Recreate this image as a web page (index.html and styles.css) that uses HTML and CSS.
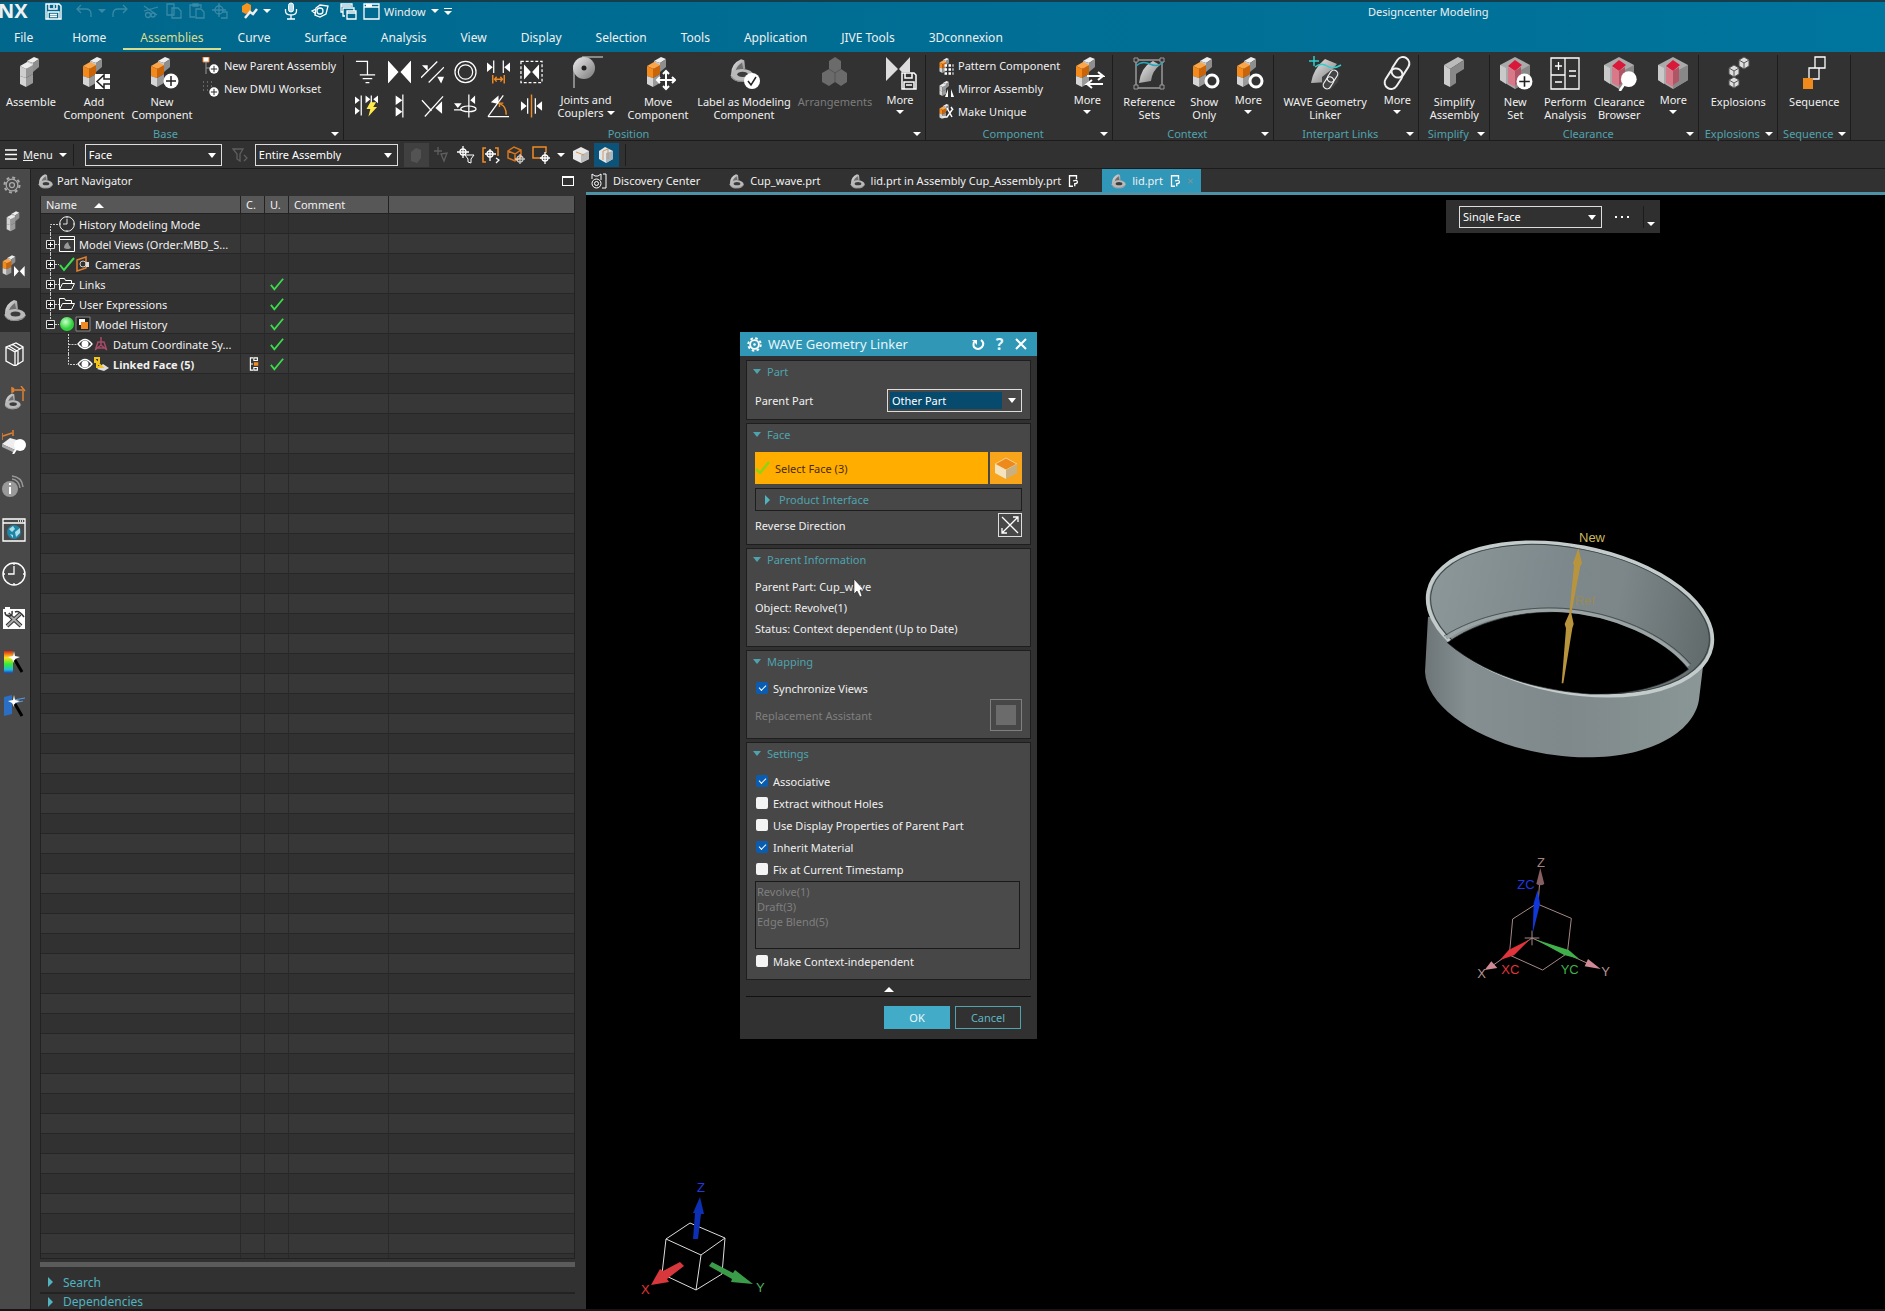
FILE: index.html
```html
<!DOCTYPE html>
<html lang="en">
<head>
<meta charset="utf-8">
<title>Designcenter Modeling</title>
<link rel="stylesheet" href="styles.css">
</head>
<body>
<svg class="defs" aria-hidden="true">
  <defs>
    <linearGradient id="metal" x1="0" y1="0" x2="1" y2="1"><stop offset="0" stop-color="#eee"/><stop offset="1" stop-color="#777"/></linearGradient>
    <linearGradient id="rainbow" x1="0" y1="0" x2="0" y2="1"><stop offset="0" stop-color="#d21"/><stop offset=".3" stop-color="#fd2"/><stop offset=".6" stop-color="#3e3"/><stop offset=".85" stop-color="#2bd"/><stop offset="1" stop-color="#14c"/></linearGradient>
    <radialGradient id="ball" cx=".4" cy=".35"><stop offset="0" stop-color="#c8ffc8"/><stop offset="1" stop-color="#2fd23c"/></radialGradient>
  </defs>
  <symbol id="blocks" viewBox="0 0 36 36">
    <path fill="#eee" d="M14 6l7-4 5 2-6 4z"/><path fill="#c9c9c9" d="M14 6l6 2v9l-6-2z"/><path fill="#8e8e8e" d="M20 8l6-4v8l-6 5z"/>
    <path class="c-top" d="M7 11l7-4 6 3-7 4z"/><path class="c-left" d="M7 11l6 3v9l-6-2z"/><path class="c-right" d="M13 14l7-4v9l-7 4z"/>
    <path fill="#d5d5d5" d="M7 21l6 2v9l-6-3z"/><path fill="#9a9a9a" d="M13 23l7-4v9l-7 4z"/>
  </symbol>
  <symbol id="part" viewBox="0 0 24 24">
    <path fill="url(#metal)" d="M3 15Q3 6 12 2l3 1 1 8-5 2q-2 2-1 3l-4 3z"/>
    <path fill="#6d6d6d" d="M7 14q0-5 6-9l1 6q-5 1-7 3z"/>
    <ellipse cx="13" cy="17" rx="10.500" ry="6" fill="#b9b9b9"/><ellipse cx="13.500" cy="16" rx="5" ry="2.500" fill="#3c3c3c"/>
    <path fill="none" stroke="#888" d="M3 18q4 6 13 4 6-1 8-5"/>
  </symbol>
  <symbol id="mate" viewBox="0 0 24 24"><path fill="#fff" d="M0 0l11 12L0 24zM24 0L13 12l11 12z"/></symbol>
  <symbol id="tick" viewBox="0 0 16 16"><path fill="none" stroke="#3bdc4c" stroke-width="2" d="M1 9l4 5L15 2"/></symbol>
  <symbol id="folder" viewBox="0 0 16 16"><path fill="none" stroke="#fff" d="M.5 13.500V2.500h5l1 2h6v3M.5 13.500l3-6h12l-3 6z"/></symbol>
  <symbol id="clock" viewBox="0 0 24 24"><circle cx="12" cy="12" r="11" fill="none" stroke="#fff" stroke-width="1.400"/><path fill="none" stroke="#fff" stroke-width="1.300" d="M12 4v8H6M12 1v2M12 21v2M1 12h2M21 12h2"/></symbol>
  <symbol id="hex" viewBox="0 0 36 36">
    <path fill="#aaa" d="M3 10L18 2l15 8v15l-15 9L3 25z"/><path fill="#888" d="M18 18l15-8v15l-15 9z"/><path fill="#c9c9c9" d="M3 10l6 3v16l-6-4z"/>
    <path fill="#d9183a" d="M11 11l7-6 7 5-7 6z"/><path fill="#d8798a" d="M11 12l7 4v16l-7-4z"/><path fill="#b05565" d="M18 16l6-4v14l-6 4z"/>
  </symbol>
  <symbol id="plusball" viewBox="0 0 16 16"><circle cx="8" cy="8" r="7.500" fill="#fff"/><path stroke="#222" stroke-width="1.500" d="M8 3v10M3 8h10"/></symbol>
  <symbol id="eye" viewBox="0 0 16 16"><path fill="none" stroke="#fff" stroke-width="1.300" d="M1 8q7-9 14 0-7 9-14 0z"/><circle cx="8" cy="8" r="3.500" fill="#fff"/></symbol>
  <symbol id="plus" viewBox="0 0 18 20"><path stroke="#ccc" stroke-dasharray="2 1" d="M9.500 0v5M9.500 15v5M14 10.500h4"/><path fill="#222" stroke="#ddd" d="M5.500 6.500h8v8h-8z"/><path stroke="#fff" d="M7 10.500h5M9.500 8v5"/></symbol>
  <symbol id="minus" viewBox="0 0 18 20"><path stroke="#ccc" stroke-dasharray="2 1" d="M9.500 0v5M14 10.500h4"/><path fill="#222" stroke="#ddd" d="M5.500 6.500h8v8h-8z"/><path stroke="#fff" d="M7 10.500h5"/></symbol>
  <symbol id="link" viewBox="0 0 36 36"><g fill="none" stroke="currentColor" stroke-width="2"><rect x="15" y="1" width="13" height="22" rx="6.500" transform="rotate(33 21 12)"/><rect x="8" y="13" width="13" height="22" rx="6.500" transform="rotate(33 15 24)"/></g></symbol>
  <symbol id="docs" viewBox="0 0 12 16"><path fill="none" stroke="#fff" stroke-width="1.500" d="M10 6V2H2v12h4"/><path fill="none" stroke="#fff" stroke-width="1.500" d="M6 8q5-2 5 1 0 2-3 2v3"/></symbol>
  <symbol id="lens" viewBox="0 0 16 16"><path stroke="#fff" stroke-width="2" d="M6 10l-4 6"/><circle cx="9" cy="7" r="6" fill="#fff"/></symbol>
</svg>

<header class="top">
  <div class="titlebar">
    <strong class="logo">NX</strong>
    <button class="q q-save" aria-label="Save"><svg width="17" height="17" viewBox="0 0 17 17"><path fill="none" stroke="#fff" stroke-width="1.400" d="M1 1h13l2 2v13H1zM4 1v5h8V1M3 16V9h11v7M5 11.500h7M5 13.500h7M9 2v3"/></svg></button>
    <button class="q dim" aria-label="Undo"><svg width="16" height="16" viewBox="0 0 16 16"><path class="ln" d="M5 2L1 6l4 4M1 6h9q5 0 5 5v3"/></svg></button>
    <i class="q-arrow dim"></i>
    <button class="q q-redo dim" aria-label="Redo"><svg width="16" height="16" viewBox="0 0 16 16"><path class="ln" d="M11 2l4 4-4 4M15 6H6q-5 0-5 5v3"/></svg></button>
    <button class="q dim" aria-label="Cut"><svg width="16" height="16" viewBox="0 0 16 16"><path class="ln" d="M1 8l14-4M1 3l13 9"/><circle class="ln" cx="5" cy="12" r="2.500"/><circle class="ln" cx="10" cy="12" r="2"/></svg></button>
    <button class="q dim" aria-label="Copy"><svg width="16" height="16" viewBox="0 0 16 16"><path class="ln" d="M1 1h7v11H1zM6 5h6l3 3v7H6z"/></svg></button>
    <button class="q dim" aria-label="Paste"><svg width="16" height="16" viewBox="0 0 16 16"><path class="ln" d="M6 14H1V2h11v3M4 1h5v2H4zM7 6h5l3 3v6H7z"/></svg></button>
    <button class="q q-last dim" aria-label="Paste target"><svg width="16" height="16" viewBox="0 0 16 16"><path class="ln" d="M7 0v14M0 7h14M10 9h5v6H9"/><circle class="ln" cx="7" cy="7" r="4"/></svg></button>
    <button class="q" aria-label="Customize"><svg width="18" height="18" viewBox="0 0 18 18"><path fill="#f7941d" d="M2 4l5-3 4 2v6l-5 3-4-2z"/><path stroke="#eee" stroke-width="2.500" fill="none" d="M5 16l5-6 3 2 4-5"/></svg></button>
    <i class="q-arrow q-end"></i>
    <button class="q q-last" aria-label="Voice"><svg width="16" height="18" viewBox="0 0 16 18"><rect x="5.500" y="1" width="5" height="9" rx="2.500" fill="#bde" stroke="#fff"/><path class="ln" d="M2.500 7v2q0 4 5.500 4t5.500-4V7M8 13v4M4 17h8"/></svg></button>
    <button class="q q-last" aria-label="Repeat"><svg width="18" height="16" viewBox="0 0 18 16"><path class="ln" d="M5 5l4-3 8 1-2 8-6 3-5-2zM5 6L1 8l4 3"/><circle cx="9" cy="8" r="3" class="ln"/></svg></button>
    <button class="q" aria-label="Switch window"><svg width="17" height="17" viewBox="0 0 17 17"><path class="ln" d="M3 9H1V1h11v3M1 3h10M5 13H3V5h11v3M7 8h9v8H7zM7 10h9"/></svg></button>
    <button class="q q-window"><svg width="17" height="17" viewBox="0 0 17 17"><path class="ln" d="M1 1h15v15H1zM1 4h15M3 2.500h6"/></svg>Window</button>
    <i class="q-arrow"></i>
    <button aria-label="Toolbar options"><svg width="12" height="8" viewBox="0 0 12 8"><path fill="#fff" d="M2 0h8v1H2zM2 3h8L6 7z"/></svg></button>
    <h1 class="app-title">Designcenter Modeling</h1>
  </div>
  <nav class="menu">
    <a class="file" href="#">File</a><a href="#">Home</a><a class="on" href="#">Assemblies</a><a href="#">Curve</a><a href="#">Surface</a><a href="#">Analysis</a><a href="#">View</a><a href="#">Display</a><a href="#">Selection</a><a href="#">Tools</a><a href="#">Application</a><a href="#">JIVE Tools</a><a href="#">3Dconnexion</a>
  </nav>
</header>

<section class="ribbon">
  <div class="group">
    <div class="tools">
      <button class="big w62 grey"><svg viewBox="0 0 36 36"><use href="#blocks"/></svg><span>Assemble</span></button>
      <button class="big w64"><svg viewBox="0 0 36 36"><use href="#blocks"/><path fill="#fff" d="M19 19h15v15H19z"/><path fill="none" stroke="#222" stroke-width="1.500" d="M34 24h-6v-4l-7 6.500 7 6.500v-4h6"/></svg><span>Add<br>Component</span></button>
      <button class="big w72"><svg viewBox="0 0 36 36"><use href="#blocks"/><use href="#plusball" x="19" y="18" width="16" height="16"/></svg><span>New<br>Component</span></button>
      <div class="stack">
        <button class="small"><svg viewBox="0 0 18 18"><path fill="#fff" stroke="#e6823c" d="M1 0h6v5H1z"/><path stroke="#999" d="M4 5v12M4 11h4" fill="none"/><use href="#plusball" x="7" y="7" width="10" height="10"/></svg>New Parent Assembly</button>
        <button class="small"><svg viewBox="0 0 18 18"><path stroke="#999" stroke-dasharray="1 3" fill="none" d="M1 2h9M1 6h9M1 10h6"/><use href="#plusball" x="7" y="7" width="10" height="10"/></svg>New DMU Workset</button>
      </div>
    </div>
    <footer><h2>Base</h2><i class="tri"></i></footer>
  </div>

  <div class="group">
    <div class="tools">
      <div class="grid">
        <button aria-label="Fix"><svg viewBox="0 0 24 24"><path class="ln" d="M1 1h12v14M5 15h16M8 19h10M11 23h4"/></svg></button>
        <button aria-label="Touch align"><svg viewBox="0 0 24 24"><use href="#mate"/></svg></button>
        <button aria-label="Parallel"><svg viewBox="0 0 24 24"><path class="ln" d="M0 18L17 1M8 23L24 7"/><path fill="#fff" d="M1 5h6v6zM17 17h7l-3 7z"/></svg></button>
        <button aria-label="Concentric"><svg viewBox="0 0 24 24"><circle class="ln" cx="12" cy="12" r="11"/><circle class="ln" cx="12" cy="12" r="7.500"/></svg></button>
        <button aria-label="Distance"><svg viewBox="0 0 24 24"><path fill="#fff" d="M0 2l6 5-6 5zM24 2l-6 5 6 5z"/><path class="ln" d="M7 0v13M17 0v13"/><path fill="none" stroke="#f08a24" stroke-width="1.500" d="M6 15v9M18 15v9M8 19.500h8M10 17l-2 2.500 2 2.500M14 17l2 2.500-2 2.500"/></svg></button>
        <button aria-label="Bond"><svg viewBox="0 0 24 24"><path class="ln" stroke-dasharray="3 2" d="M1 1h22v22H1z"/><use href="#mate" x="4" y="4" width="16" height="16"/></svg></button>
        <button aria-label="Infer"><svg viewBox="0 0 24 24"><path fill="#fff" d="M0 2l5 4-5 4zM0 13l5 4-5 4zM11 1l5 4-5 4zM24 1l-5 4 5 4z"/><path class="ln" d="M6.500 1v21M17 1v8"/><path fill="#ffe94a" d="M16 8h6l-3 5h4l-9 10 2-8h-4z"/></svg></button>
        <button aria-label="Align"><svg viewBox="0 0 24 24"><path fill="#fff" d="M8 1l7 5-7 5zM8 13l7 5-7 5z"/><path class="ln" d="M15.500 0v24"/></svg></button>
        <button aria-label="Perpendicular"><svg viewBox="0 0 24 24"><path class="ln" d="M1 6l10 11M4 23L23 2"/><path fill="#fff" d="M15 14l7-7v13z"/></svg></button>
        <button aria-label="Center"><svg viewBox="0 0 24 24"><path class="ln" d="M15.500 0v24M0 16h8"/><ellipse class="ln" cx="15" cy="15" rx="8" ry="3"/><path fill="#fff" d="M0 9h8l-4 5zM17 6l5-5v9z"/></svg></button>
        <button aria-label="Angle"><svg viewBox="0 0 24 24"><path class="ln" d="M1 23L17 1M1 23h22"/><path fill="#fff" d="M4 8l8-7v9z"/><path fill="none" stroke="#f08a24" stroke-width="1.500" d="M14 10q6 2 6 11M13 13v-4h4"/></svg></button>
        <button aria-label="Symmetry"><svg viewBox="0 0 24 24"><path fill="#fff" d="M1 7l6 5-6 5zM23 7l-6 5 6 5z"/><path class="ln" d="M8 4v16M16 4v16"/><path stroke="#f08a24" stroke-width="1.500" d="M12 0v24"/></svg></button>
      </div>
      <button class="big drop w74"><svg viewBox="0 0 36 36"><path stroke="#888" stroke-width="2" d="M6 10v23M14 2h21" fill="none"/><circle cx="16" cy="13" r="11" fill="url(#metal)"/><circle cx="16" cy="13" r="2.500" fill="#222"/></svg><span>Joints and<br>Couplers<i class="tri"></i></span></button>
      <button class="big w70"><svg viewBox="0 0 36 36"><use href="#blocks"/><path fill="none" stroke="#fff" stroke-width="2" d="M26 16v18M17 25h18M23 19l3-3 3 3M23 31l3 3 3-3M20 22l-3 3 3 3M32 22l3 3-3 3"/></svg><span>Move<br>Component</span></button>
      <button class="big w102"><svg viewBox="0 0 36 36"><use href="#part" x="2" y="0" width="26" height="30"/><circle cx="26" cy="26" r="8" fill="#fff"/><path fill="none" stroke="#222" stroke-width="1.500" d="M22 26l3 4 5-8"/></svg><span>Label as Modeling<br>Component</span></button>
      <button class="big w80" disabled><svg viewBox="0 0 36 36"><path fill="#6b6b6b" d="M12 6l6-4 6 4v8l6 4v9l-6 4-6-4-6 4-7-4v-9l7-4z"/><path stroke="#555" fill="none" d="M12 14l6 4 6-4M18 18v9"/></svg><span>Arrangements</span></button>
      <button class="big drop w50"><svg viewBox="0 0 36 36"><path fill="#ddd" d="M4 2l12 12L4 26zM28 2L17 14l11 12z"/><path fill="#333" d="M18 17h17v18H18z"/><path fill="none" stroke="#fff" stroke-width="1.500" d="M20 18h12l2 2v14H20zM23 18v5h7v-5M22 34v-7h10v7M24 30h6"/></svg><span>More</span><i class="tri"></i></button>
    </div>
    <footer><h2>Position</h2><i class="tri"></i></footer>
  </div>

  <div class="group">
    <div class="tools">
      <div class="stack lead">
        <button class="small"><svg viewBox="0 0 36 36"><use href="#blocks"/><path stroke="#fff" stroke-width="5" stroke-dasharray="5 3" d="M17 17h18M17 25h18M17 33h18"/></svg>Pattern Component</button>
        <button class="small grey"><svg viewBox="0 0 36 36"><use href="#blocks"/><path fill="#fff" d="M18 34l6-16v16zM36 34l-6-16v16z"/></svg>Mirror Assembly</button>
        <button class="small"><svg viewBox="0 0 36 36"><use href="#blocks"/><path fill="none" stroke="#fff" stroke-width="3" d="M12 28h10l10-14M22 10l10 18M30 8l4 6"/></svg>Make Unique</button>
      </div>
      <button class="big drop w50"><svg viewBox="0 0 36 36"><use href="#blocks"/><path fill="none" stroke="#fff" stroke-width="2" d="M18 21h16l-5-4M34 21l-5 4M34 29H18l5-4M18 29l5 4"/></svg><span>More</span><i class="tri"></i></button>
    </div>
    <footer><h2>Component</h2><i class="tri"></i></footer>
  </div>

  <div class="group">
    <div class="tools">
      <button class="big w72"><svg viewBox="0 0 36 36"><path fill="none" stroke="#999" stroke-width="1.500" d="M5 5h26v28H5z"/><path fill="url(#metal)" d="M8 28Q10 12 22 6l7 4q-8 6-9 16z"/><path fill="none" stroke="#2aa5b8" stroke-width="1.500" d="M5 11q6-6 14-2t14-3"/><path fill="#333" stroke="#999" d="M3 3h4v4H3zM29 3h4v4h-4zM3 30h4v4H3zM29 30h4v4h-4z"/></svg><span>Reference<br>Sets</span></button>
      <button class="big w38"><svg viewBox="0 0 36 36"><use href="#blocks"/><circle cx="26" cy="26" r="6" fill="#333" stroke="#fff" stroke-width="3"/></svg><span>Show<br>Only</span></button>
      <button class="big drop w50"><svg viewBox="0 0 36 36"><use href="#blocks"/><circle cx="26" cy="26" r="6" fill="#333" stroke="#fff" stroke-width="3"/></svg><span>More</span><i class="tri"></i></button>
    </div>
    <footer><h2>Context</h2><i class="tri"></i></footer>
  </div>

  <div class="group">
    <div class="tools">
      <button class="big w102"><svg viewBox="0 0 36 36"><path fill="url(#metal)" d="M4 28Q6 14 18 4l12 5q-8 8-8 18z"/><path fill="none" stroke="#3cc" stroke-width="1.500" d="M7 1v10M2 6h10M8 12q6-5 12-1t14-1"/><path fill="#444" d="M15 22l9-7 9 2-2 10-8 8-8-3z"/><use href="#link" x="13" y="14" width="21" height="21"/></svg><span>WAVE Geometry<br>Linker</span></button>
      <button class="big drop w42"><svg viewBox="0 0 36 36"><use href="#link" x="0" y="0" width="36" height="36"/></svg><span>More</span><i class="tri"></i></button>
    </div>
    <footer><h2>Interpart Links</h2><i class="tri"></i></footer>
  </div>

  <div class="group">
    <div class="tools">
      <button class="big w70"><svg viewBox="0 0 36 36"><path fill="#bbb" d="M8 10l14-8 6 3-14 9z"/><path fill="#ccc" d="M8 10l6 4v18l-6-3z"/><path fill="#888" d="M14 14l14-9v9l-8 5v9l-6 4z"/></svg><span>Simplify<br>Assembly</span></button>
    </div>
    <footer><h2>Simplify</h2><i class="tri"></i></footer>
  </div>

  <div class="group">
    <div class="tools">
      <button class="big w50"><svg viewBox="0 0 36 36"><use href="#hex"/><use href="#plusball" x="19" y="18" width="17" height="17"/></svg><span>New<br>Set</span></button>
      <button class="big w50"><svg viewBox="0 0 36 36"><path class="ln" d="M4 3h28v31H4zM18 3v31M4 20h14M8 11h7M11.500 7v8M8 27h7M22 16h7M22 21h7"/></svg><span>Perform<br>Analysis</span></button>
      <button class="big w58"><svg viewBox="0 0 36 36"><use href="#hex"/><use href="#lens" x="16" y="15" width="21" height="21"/></svg><span>Clearance<br>Browser</span></button>
      <button class="big drop w50"><svg viewBox="0 0 36 36"><use href="#hex"/></svg><span>More</span><i class="tri"></i></button>
    </div>
    <footer><h2>Clearance</h2><i class="tri"></i></footer>
  </div>

  <div class="group">
    <div class="tools">
      <button class="big w78"><svg viewBox="0 0 36 36"><g stroke="#555" fill="#ddd"><path d="M19 5l5-3 5 3v6l-5 3-5-3zM9 13l5-3 5 3v6l-5 3-5-3zM9 25l5-3 5 3v5l-5 3-5-3z"/><path d="M19 5l5 3 5-3M24 8v6M9 13l5 3 5-3M14 16v6M9 25l5 3 5-3M14 28v5"/></g></svg><span>Explosions</span></button>
    </div>
    <footer><h2>Explosions</h2><i class="tri"></i></footer>
  </div>

  <div class="group">
    <div class="tools">
      <button class="big w72"><svg viewBox="0 0 36 36"><path class="ln" d="M19 2h10v11H19zM13 13h10v11H13z"/><path fill="#f08a1c" d="M7 23h10v11H7z"/></svg><span>Sequence</span></button>
    </div>
    <footer><h2>Sequence</h2><i class="tri"></i></footer>
  </div>
</section>

<section class="selbar">
  <button class="menubtn"><svg width="12" height="11" viewBox="0 0 12 11"><path class="ln" d="M0 1h12M0 5.500h12M0 10h12"/></svg><span><u>M</u>enu</span><i class="tri"></i></button>
  <i class="vline"></i>
  <label class="drop-box w137"><select aria-label="Type filter"><option>Face</option></select></label>
  <button class="ic dim" aria-label="Reset filter"><svg viewBox="0 0 18 18"><path class="ln" d="M2 3h10L9 8v7l-3-2V8zM13 9l3 3-3 3"/></svg></button>
  <label class="drop-box w143"><select aria-label="Scope"><option>Entire Assembly</option></select></label>
  <button class="ic dim shade" aria-label="Face rule"><svg viewBox="0 0 18 18"><path fill="#ccc" d="M4 6l5-4 5 2v8l-4 5-6-2z"/></svg></button>
  <button class="ic dim" aria-label="Chain"><svg viewBox="0 0 18 18"><path class="ln" d="M2 5h8M6 1v8M9 8l6-1-3 8z"/></svg></button>
  <button class="ic" aria-label="Snap filter"><svg viewBox="0 0 18 18"><path class="ln" d="M6 0v12M0 6h12"/><circle class="ln" cx="6" cy="6" r="3"/><path fill="#333" stroke="#fff" d="M8 9h9l-3 4v4l-3-1v-3z"/></svg></button>
  <button class="ic" aria-label="Snap region"><svg viewBox="0 0 18 18"><path stroke="#f08a24" stroke-width="1.500" fill="none" d="M4 2H1v14h3M13 2h3v8"/><path class="ln" d="M8 3v12M3 8h11M14 12l3 2-3 3"/><circle class="ln" cx="8" cy="8" r="3"/></svg></button>
  <button class="ic" aria-label="Body target"><svg viewBox="0 0 18 18"><path stroke="#d8761c" stroke-width="1.500" fill="none" d="M1 5l6-4 7 3v7l-6 4-7-3zM1 5l7 3 6-4M8 8v7"/><g opacity=".7"><circle class="ln" cx="13" cy="13" r="3"/><path class="ln" d="M13 8v10M8 13h10"/></g></svg></button>
  <button class="ic" aria-label="Rectangle target"><svg viewBox="0 0 18 18"><path stroke="#f08a24" stroke-width="1.500" fill="none" d="M9 12H1V1h13v6"/><circle class="ln" cx="13" cy="12" r="3"/><path class="ln" d="M13 6v12M8 12h10"/></svg></button>
  <button class="ic slim" aria-label="More targets"><i class="tri"></i></button>
  <button class="ic" aria-label="Wire view"><svg viewBox="0 0 18 18"><path fill="#e8e8e8" d="M1 5l8-4 8 4v8l-8 4-8-4z"/><path fill="#bbb" d="M9 9l8-4v8l-8 4z"/><path stroke="#d5945a" d="M4 6l8 3"/></svg></button>
  <button class="ic active" aria-label="Shaded view"><svg viewBox="0 0 18 18"><path fill="#dfe6ea" d="M2 5l6-4 8 4v8l-7 4-7-4z"/><path fill="#a9b5bc" d="M9 7l7-2v8l-7 4z"/><path stroke="#d5945a" fill="none" d="M6 14V5l5-2v10"/></svg></button>
  <i class="vline"></i>
</section>

<main class="work">
  <nav class="rail">
    <button class="first" aria-label="Settings"><svg viewBox="0 0 24 24"><circle cx="12" cy="12" r="7" fill="none" stroke="#aaa" stroke-width="1.500"/><circle cx="12" cy="12" r="3" fill="none" stroke="#aaa" stroke-width="1.500"/><circle cx="12" cy="12" r="9" fill="none" stroke="#aaa" stroke-width="2.500" stroke-dasharray="3.500 3.570"/></svg></button>
    <button class="grey" aria-label="Assembly Navigator"><svg viewBox="0 0 36 36"><use href="#blocks"/></svg></button>
    <button aria-label="Constraint Navigator"><svg viewBox="0 0 36 36"><use href="#blocks" x="-6" y="0" width="36" height="36"/><use href="#mate" x="16" y="18" width="20" height="16"/></svg></button>
    <button class="on" aria-label="Part Navigator"><svg viewBox="0 0 24 24"><use href="#part"/></svg></button>
    <button aria-label="Reuse Library"><svg viewBox="0 0 24 24"><path fill="none" stroke="#fff" stroke-width="1.300" d="M4 5l10-4 7 4v14l-8 5-9-5zM4 5l9 5v14M13 10l8-5M7 4l8 5M10 2l8 5M16 9v13"/></svg></button>
    <button aria-label="Dimensions"><svg viewBox="0 0 24 24"><use href="#part" x="0" y="6" width="20" height="18"/><path fill="none" stroke="#e08030" stroke-width="1.500" d="M10 1v6M10 4h12M12 2l-2 2 2 2M19 0l4 5M21 5v10"/></svg></button>
    <button aria-label="Inspect"><svg viewBox="0 0 24 24"><path fill="#eee" d="M0 14l8-6 14 4-9 8z"/><path fill="#aaa" d="M0 14l13 6v3L0 17z"/><path fill="none" stroke="#e08030" stroke-width="1.500" d="M0 3v7M11 0v6M1 6l9-3"/><use href="#lens" x="9" y="8" width="16" height="16"/></svg></button>
    <button aria-label="Information"><svg viewBox="0 0 24 24"><circle cx="8" cy="15" r="8" fill="#999"/><path stroke="#fff" stroke-width="2" d="M8 13v7M8 9v2"/><path fill="none" stroke="#999" stroke-width="1.500" d="M10 5q7 1 8 9M10 2q10 1 11 11"/></svg></button>
    <button aria-label="Web browser"><svg viewBox="0 0 24 24"><path fill="none" stroke="#fff" stroke-width="1.300" d="M1 1h22v22H1zM1 5h22M16 3h1M18 3h1M20 3h1"/><circle cx="12" cy="14" r="7" fill="#1d84a6"/><path fill="#a9dbe8" d="M7 11l4-3 2 3-3 3zM13 14l5-4v5l-4 4zM8 16l3 1v3z"/></svg></button>
    <button aria-label="History"><svg viewBox="0 0 24 24"><use href="#clock"/></svg></button>
    <button aria-label="Process Studio"><svg viewBox="0 0 24 24"><path fill="#fff" d="M1 3h2V1h5v2h15v20H1z"/><path stroke="#333" stroke-width="4" d="M6 8l13 12M18 8L5 20"/><path stroke="#aaa" stroke-width="2" d="M6 8l13 12M18 8L5 20"/><path fill="none" stroke="#333" stroke-width="1.500" d="M3 6q0 4 4 4t3-5M13 6q4-2 9 5"/></svg></button>
    <button aria-label="Roles"><svg viewBox="0 0 24 24"><path fill="url(#rainbow)" d="M2 1h9v22H2z"/><path fill="#fff" d="M12 1l1 5 5 1-5 2-1 4-2-4-4-2 5-1z"/><path stroke="#000" stroke-width="3" d="M13 10l7 12"/></svg></button>
    <button aria-label="System Visualization"><svg viewBox="0 0 24 24"><path fill="#2b6fc4" d="M2 3l8-2v19l-8 2z"/><path stroke="#5a9be8" d="M12 6l11-2M12 9l9-2" /><path fill="#fff" d="M12 1l1 5 5 1-5 2-1 4-2-4-4-2 5-1z"/><path stroke="#000" stroke-width="3" d="M13 10l7 12"/></svg></button>
  </nav>

  <aside class="navigator">
    <header><svg width="16" height="16" viewBox="0 0 24 24"><use href="#part"/></svg><h2>Part Navigator</h2><button class="maxi" aria-label="Maximize"></button></header>
    <div class="tree">
      <table>
        <thead><tr><th class="c-name">Name <i class="sort"></i></th><th class="c-c">C.</th><th class="c-u">U.</th><th class="c-comment">Comment</th><th></th></tr></thead>
        <tbody>
          <tr><td><div class="node"><svg class="ex" viewBox="0 0 18 20"><path stroke="#ccc" stroke-dasharray="2 1" fill="none" d="M9.500 20v-9.500H18"/></svg><svg class="ni"><use href="#clock"/></svg><span>History Modeling Mode</span></div></td><td></td><td></td><td></td><td></td></tr>
          <tr><td><div class="node"><svg class="ex"><use href="#plus"/></svg><svg class="ni" viewBox="0 0 16 16"><path fill="none" stroke="#fff" d="M.5.500h15v15H.5zM.5 3.500h15"/><path fill="#999" d="M5 12q0-4 4-6l1 3 2 3q-3 2-7 0z"/></svg><span>Model Views (Order:MBD_S...</span></div></td><td></td><td></td><td></td><td></td></tr>
          <tr><td><div class="node"><svg class="ex"><use href="#plus"/></svg><svg class="ni"><use href="#tick"/></svg><svg class="ni" viewBox="0 0 16 16"><path fill="none" stroke="#e08030" stroke-width="1.500" d="M2 4l9-3v11l-9 3z"/><circle cx="8" cy="8" r="3" fill="none" stroke="#ccc"/><path fill="#ddd" d="M11 6h3v5h-3z"/></svg><span>Cameras</span></div></td><td></td><td></td><td></td><td></td></tr>
          <tr><td><div class="node"><svg class="ex"><use href="#plus"/></svg><svg class="ni"><use href="#folder"/></svg><span>Links</span></div></td><td></td><td><svg class="ok"><use href="#tick"/></svg></td><td></td><td></td></tr>
          <tr><td><div class="node"><svg class="ex"><use href="#plus"/></svg><svg class="ni"><use href="#folder"/></svg><span>User Expressions</span></div></td><td></td><td><svg class="ok"><use href="#tick"/></svg></td><td></td><td></td></tr>
          <tr><td><div class="node"><svg class="ex"><use href="#minus"/></svg><svg class="ni" viewBox="0 0 16 16"><circle cx="8" cy="8" r="7" fill="url(#ball)"/></svg><svg class="ni" viewBox="0 0 16 16"><path fill="#222" stroke="#888" d="M1 1h14v14H1z"/><path fill="#fff" d="M4 3h6v6H4z"/><path fill="#f08a24" d="M6 6h7v7H6z"/></svg><span>Model History</span></div></td><td></td><td><svg class="ok"><use href="#tick"/></svg></td><td></td><td></td></tr>
          <tr><td><div class="node child"><svg class="ex" viewBox="0 0 18 20"><path stroke="#ccc" stroke-dasharray="2 1" fill="none" d="M9.500 0v20M9.500 10.500H18"/></svg><svg class="ni"><use href="#eye"/></svg><svg class="ni" viewBox="0 0 16 16"><path fill="none" stroke="#a84a68" stroke-width="1.500" d="M8 1v8l-6 5M8 9l6 5M5 6L3 12h10l-2-6z"/></svg><span>Datum Coordinate Sy...</span></div></td><td></td><td><svg class="ok"><use href="#tick"/></svg></td><td></td><td></td></tr>
          <tr><td><div class="node child"><svg class="ex" viewBox="0 0 18 20"><path stroke="#ccc" stroke-dasharray="2 1" fill="none" d="M9.500 0v10.500H18"/></svg><svg class="ni"><use href="#eye"/></svg><svg class="ni" viewBox="0 0 16 16"><path fill="#ddd" d="M4 13l6-5 6 4-5 3z"/><path fill="none" stroke="#f2c41c" stroke-width="2" d="M2 2h4v4H2zM4 6l5 5H4z"/></svg><span><b>Linked Face (5)</b></span></div></td><td><svg class="ok" viewBox="0 0 16 16"><path fill="none" stroke="#fff" stroke-width="1.300" d="M8 1H5v14h3M5 8h3M9 1h4v3H9zM9 12h4v3H9z"/><path fill="#f08a24" d="M9 6h5v4H9z"/></svg></td><td><svg class="ok"><use href="#tick"/></svg></td><td></td><td></td></tr>
        </tbody>
      </table>
    </div>
    <div class="splitter"></div>
    <button class="fold"><i></i>Search</button>
    <button class="fold"><i></i>Dependencies</button>
  </aside>

  <section class="view">
    <nav class="tabs">
      <a href="#" class="first"><svg viewBox="0 0 16 16"><path fill="none" stroke="#fff" d="M1 6V1l3 2h3l3-2v6M12 1h3v14h-4"/><circle cx="5.500" cy="10.500" r="4.500" fill="none" stroke="#fff"/><circle cx="5.500" cy="10.500" r="2" fill="none" stroke="#fff"/></svg>Discovery Center</a>
      <a href="#"><svg><use href="#part"/></svg>Cup_wave.prt</a>
      <a href="#"><svg><use href="#part"/></svg>lid.prt in Assembly Cup_Assembly.prt<svg class="doc"><use href="#docs"/></svg></a>
      <a href="#" class="on"><svg><use href="#part"/></svg>lid.prt<svg class="doc"><use href="#docs"/></svg><span class="x">×</span></a>
    </nav>
    <div class="canvas">
      <div class="floatbar">
        <label class="drop-box w143"><select aria-label="Face rule"><option>Single Face</option></select></label>
        <button class="dots" aria-label="More options"><i></i><i></i><i></i></button>
        <i class="vline"></i><i class="tri"></i>
      </div>

      <svg class="model" viewBox="0 0 1020 1500">
        <defs>
          <linearGradient id="outer" x1="0" x2="1" y1="0" y2="0"><stop offset="0" stop-color="#6d7577"/><stop offset=".15" stop-color="#858f92"/><stop offset=".5" stop-color="#7f888b"/><stop offset=".75" stop-color="#848f90"/><stop offset="1" stop-color="#8b9797"/></linearGradient>
          <linearGradient id="inner" x1="0" x2="1" y1="0" y2="0"><stop offset="0" stop-color="#8c9799"/><stop offset=".45" stop-color="#7d888c"/><stop offset=".65" stop-color="#7d8789"/><stop offset="1" stop-color="#616a6b"/></linearGradient>
        </defs>
        <path fill="url(#outer)" d="M84 350L75 515C80 640 300 770 560 772C760 772 890 690 898 590L915 450Z"/>
        <g transform="rotate(11 510 357)"><ellipse cx="510" cy="357" rx="433" ry="219" fill="url(#inner)" stroke="#c3cbcb" stroke-width="11"/><ellipse cx="510" cy="357" rx="424" ry="212" fill="none" stroke="#3c4243" stroke-width="3"/></g>
        <path fill="#000" stroke="#1b1e1f" stroke-width="2" d="M142 428C230 365 360 332 480 336C640 342 800 420 865 508C790 565 680 584 570 582C400 570 250 520 142 428Z"/>
        <path fill="none" stroke="#9aa4a5" stroke-width="10" d="M138 414C230 352 370 324 490 332C640 342 790 410 866 498"/>
        <path fill="none" stroke="#333" stroke-width="2" d="M132 408C230 346 370 317 490 325C640 335 796 403 872 492"/>
        <path fill="#b8943c" d="M485 550L498 385 494 372 508 340 522 196 519 190 535 145 546 190 541 198 514 340 521 372 517 385 490 550z"/>
        <g font-size="39">
          <text x="537" y="126" fill="#c9b860">New</text><text x="524" y="314" fill="#958a5c">Ref</text>
          <path fill="none" stroke="#a58985" stroke-width="3" d="M410 1211L514 1255 502 1360 428 1410 328 1365 338 1257zM396 1314L585 1400M396 1314L270 1402M415 1200L421 1120M374 1314h44M396 1292v44"/>
          <path fill="#865f62" d="M421 1104l12 48q-12 8-24 0z"/><path fill="#cf8a95" d="M602 1407l-48-8 10-22zM254 1410l20-26 18 20z"/>
          <path fill="#1237d8" d="M398 1300L401 1210 413 1170 420 1212z"/><path fill="#e0343a" d="M390 1318L326 1350 300 1380 342 1366z"/><path fill="#3fb04a" d="M405 1318L492 1365 538 1377 506 1350z"/>
          <text x="411" y="1102" fill="#a5837f">Z</text><text x="352" y="1168" fill="#2138e0">ZC</text><text x="304" y="1422" fill="#e0343a">XC</text><text x="482" y="1422" fill="#3fb04a">YC</text><text x="232" y="1434" fill="#b59490">X</text><text x="604" y="1428" fill="#b59490">Y</text>
        </g>
      </svg>

      <svg class="triad" viewBox="0 0 136 130">
        <path fill="none" stroke="#ddd" d="M54 52L30 68 26 103 60 119 86 103 89 67zM30 68L65 84 89 67M65 84L60 119"/>
        <path fill="#0c2fb4" d="M57 68l2-26h-2l7-16 4 17h-3l-3 25z"/>
        <path fill="#d8383c" d="M44 91l4 4-17 13 2 3-18 3 9-16 3 2z"/>
        <path fill="#3a9c48" d="M73 95l3-4 21 11 2-3 18 14-22-2 1-3z"/>
        <g font-size="13"><text x="61" y="21" fill="#2138e0">Z</text><text x="5" y="123" fill="#e0343a">X</text><text x="120" y="121" fill="#4fb05c">Y</text></g>
      </svg>

      <form class="dialog">
        <header><svg width="15" height="15" viewBox="0 0 24 24"><circle cx="12" cy="12" r="7" fill="none" stroke="#fff" stroke-width="3"/><circle cx="12" cy="12" r="2" fill="#fff"/><circle cx="12" cy="12" r="10" fill="none" stroke="#fff" stroke-width="3" stroke-dasharray="4 3.850"/></svg><h2>WAVE Geometry Linker</h2>
          <button type="button" aria-label="Reset"><svg width="13" height="13" viewBox="0 0 13 13"><path fill="none" stroke="#fff" stroke-width="2" d="M9 2q4 3 1 7-4 4-8 0-1-2 0-5"/><path fill="#fff" d="M0 2h5v5z"/></svg></button>
          <button type="button" class="help" aria-label="Help">?</button>
          <button type="button" aria-label="Close"><svg width="12" height="12" viewBox="0 0 12 12"><path stroke="#fff" stroke-width="2" d="M1 1l10 10M11 1L1 11"/></svg></button></header>
        <section><h3>Part</h3>
          <div class="row gap"><label for="pp">Parent Part</label><span class="drop-box focus"><select id="pp"><option>Other Part</option></select></span></div></section>
        <section><h3>Face</h3>
          <div class="pick gap"><button type="button" class="sel"><svg width="16" height="16" viewBox="0 0 16 16"><path fill="none" stroke="#8fd414" stroke-width="2.500" d="M1 9l4 4 9-11"/></svg>Select Face (3)</button><button type="button" class="face" aria-label="Face"><svg width="24" height="24" viewBox="0 0 24 24"><path fill="#ee8a1c" stroke="#f7d08a" d="M1 8l11-6 11 6-11 6z"/><path fill="#f3e3bf" d="M1 8l11 6v9L1 17z"/><path fill="#c9b083" d="M12 14l11-6v9l-11 6z"/></svg></button></div>
          <button type="button" class="sub"><i></i>Product Interface</button>
          <div class="row"><span>Reverse Direction</span><button type="button" class="rev" aria-label="Reverse Direction"><svg width="18" height="18" viewBox="0 0 18 18"><path fill="none" stroke="#fff" stroke-width="1.300" d="M1 1l16 16M1 17L17 1M12 1h5v5M1 12v5h5"/></svg></button></div></section>
        <section><h3>Parent Information</h3>
          <div class="info"><p>Parent Part: Cup_wave</p><p>Object: Revolve(1)</p><p>Status: Context dependent (Up to Date)</p></div></section>
        <section><h3>Mapping</h3>
          <div class="checks"><label><input type="checkbox" checked>Synchronize Views</label></div>
          <div class="row off"><span>Replacement Assistant</span><button type="button" class="assist" disabled aria-label="Replacement Assistant"></button></div></section>
        <section><h3>Settings</h3>
          <div class="checks loose"><label><input type="checkbox" checked>Associative</label><label><input type="checkbox">Extract without Holes</label><label><input type="checkbox">Use Display Properties of Parent Part</label><label><input type="checkbox" checked>Inherit Material</label><label><input type="checkbox">Fix at Current Timestamp</label></div>
          <textarea disabled aria-label="Features">Revolve(1)
Draft(3)
Edge Blend(5)</textarea>
          <div class="checks tight"><label><input type="checkbox">Make Context-independent</label></div></section>
        <div class="collapse"><i></i></div>
        <footer><button type="button" class="primary">OK</button><button type="button">Cancel</button></footer>
        <svg class="cursor" viewBox="0 0 12 20"><path fill="#fff" stroke="#222" stroke-width=".6" d="M1 1v15l3-3 3 6 2-1-2-6h4z"/></svg>
      </form>
    </div>
  </section>
</main>
</body>
</html>
```
FILE: styles.css
```css
* { box-sizing: border-box; margin: 0; padding: 0; }
body { --cube-top: #f9a548; --cube-left: #f58a1c; --cube-right: #c96508; height: 100vh; overflow: hidden; display: flex; flex-direction: column; background: #313131; color: #f0f0f0; font: 11px/13px "Noto Sans", "Open Sans", sans-serif; border-top: 2px solid #173c4a; border-bottom: 2px solid #161616; }
button { background: none; border: 0; color: inherit; font: inherit; }
a { color: inherit; text-decoration: none; }
h1, h2, h3 { font-size: inherit; font-weight: normal; }
svg { flex: none; }
i { display: inline-block; flex: none; }
text { font-family: "Liberation Sans", Arial, sans-serif; }
.defs { position: absolute; width: 0; height: 0; }
.ln { fill: none; stroke: #fff; stroke-width: 1.3; }
.c-top { fill: var(--cube-top); }
.c-left { fill: var(--cube-left); }
.c-right { fill: var(--cube-right); }
.grey { --cube-top: #ececec; --cube-left: #cfcfcf; --cube-right: #969696; }
.tri { border: 4px solid transparent; border-top: 4px solid #fff; border-bottom: 0; }
.vline { width: 1px; height: 22px; background: #1c1c1c; }
.dim { opacity: .22; }

/* title bar and menu */
.top { background: linear-gradient(90deg, #01678c, #00759d); flex: none; }
.titlebar { display: flex; align-items: center; height: 18px; position: relative; }
.logo { width: 34px; font: bold 20px/18px "Open Sans", sans-serif; margin-left: -2px; margin-right: 2px; }
.q { width: 23px; height: 18px; display: flex; align-items: center; justify-content: center; }
.q-save { width: 38px; }
.q-redo { margin-right: 8px; }
.q-last, .q-end { margin-right: 6px; }
.q-window { width: auto; gap: 4px; padding-left: 3px; margin-right: 3px; }
.q-arrow { width: 13px; display: flex; justify-content: center; }
.q-arrow::before { content: ""; border: 4px solid transparent; border-top-color: #fff; border-bottom: 0; }
.app-title { position: absolute; left: 1368px; white-space: nowrap; }
.menu { display: flex; height: 32px; font-size: 12px; }
.menu a { padding: 11px 17px 0; margin-bottom: 2px; border-bottom: 2px solid transparent; }
.menu .file { padding-left: 14px; margin-right: 5px; }
.menu .on { color: #d9dc8c; border-color: #d9dc8c; }

/* ribbon */
.ribbon { display: flex; height: 89px; border-bottom: 1px solid #1c1c1c; background: #323232; flex: none; }
.group { display: flex; flex-direction: column; border-right: 1px solid #1c1c1c; margin: 3px 0 0; }
.group:first-child { width: 344px; }
.tools { display: flex; height: 72px; }
.group footer { display: flex; align-items: center; color: #51a3ae; line-height: 13px; padding-right: 4px; }
.group footer h2 { flex: 1; text-align: center; }
.big { display: flex; flex-direction: column; align-items: center; white-space: nowrap; }
.big svg { width: 36px; height: 36px; margin-bottom: 4px; }
.big.drop svg { margin-bottom: 2px; }
.big > .tri { margin-top: 4px; }
.big span .tri { margin-left: 3px; vertical-align: 2px; }
.big:disabled { color: #7c7c7c; }
.w38 { width: 38px; } .w42 { width: 42px; } .w50 { width: 50px; } .w58 { width: 58px; }
.w62 { width: 62px; } .w64 { width: 64px; } .w70 { width: 70px; } .w72 { width: 72px; }
.w74 { width: 74px; } .w78 { width: 78px; } .w80 { width: 80px; } .w102 { width: 102px; }
.w137 { width: 137px; } .w143 { width: 143px; }
.stack { padding-left: 4px; margin-top: -1px; }
.stack.lead { padding: 0 2px 0 10px; }
.small { display: flex; align-items: center; gap: 4px; height: 23px; white-space: nowrap; }
.small svg { width: 18px; height: 18px; }
.grid { display: grid; grid-template-columns: repeat(6, 33px); grid-auto-rows: 34px; padding: 0 1px 0 6px; }
.grid button { display: grid; place-items: center; }
.grid svg { width: 23px; height: 24px; }

/* selection bar */
.selbar { display: flex; align-items: center; height: 28px; flex: none; border-bottom: 1px solid #1c1c1c; }
.menubtn { display: flex; align-items: center; gap: 6px; padding: 0 5px; margin-right: 1px; }
.selbar .drop-box { margin-left: 11px; }
.selbar .ic.dim + .drop-box { margin-left: 2px; }
.ic { width: 25px; height: 24px; display: grid; place-items: center; }
.drop-box + .ic { margin-left: 6px; }
.ic svg { width: 18px; height: 18px; }
.ic.slim { width: 15px; }
.ic.shade { background: #777; }
.ic.active { background: #0b5378; margin-right: 6px; }
.drop-box { position: relative; display: block; }
.drop-box::after { content: ""; position: absolute; right: 6px; top: 9px; border: 4px solid transparent; border-top: 5px solid #fff; border-bottom: 0; pointer-events: none; }
.drop-box select { appearance: none; display: block; width: 100%; height: 22px; padding: 0 3px; border: 1px solid #ddd; border-radius: 0; background: #313131; color: #fff; font: inherit; }

/* work area */
.work { display: flex; flex: 1; min-height: 0; }
.rail { width: 31px; background: #494949; border-right: 1px solid #202020; display: flex; flex-direction: column; flex: none; }
.rail button { height: 44px; display: flex; align-items: center; padding-left: 2px; flex: none; }
.rail .first { height: 31px; }
.rail .on { background: #2e2e2e; }
.rail svg { width: 24px; height: 24px; }
.rail .first svg { width: 20px; height: 20px; }
.navigator { width: 555px; flex: none; display: flex; flex-direction: column; padding: 0 11px 0 9px; min-height: 0; overflow: hidden; }
.navigator header { display: flex; align-items: center; gap: 4px; height: 27px; margin-left: -3px; padding-bottom: 4px; flex: none; }
.maxi { width: 12px; height: 10px; border: 1px solid #fff; border-top-width: 2px; margin-left: auto; margin-right: 1px; }
.tree { flex: 1; min-height: 0; border: 1px solid #222; border-top: 0;
  background:
    linear-gradient(90deg, transparent 199px, #292929 199px 200px, transparent 200px 223px, #292929 223px 224px, transparent 224px 247px, #292929 247px 248px, transparent 248px 347px, #292929 347px 348px, transparent 348px),
    repeating-linear-gradient(#373737 0 17px, #262626 17px 18px, #313131 18px 37px, #262626 37px 38px, #373737 38px 40px); }
.tree table { width: 100%; border-collapse: separate; border-spacing: 0; table-layout: fixed; }
.tree th { height: 18px; background: #575757; font-weight: normal; text-align: left; padding-left: 5px; border-right: 1px solid #222; border-bottom: 1px solid #222; }
.tree th:last-child { border-right: 0; }
.c-name { width: 200px; } .c-c, .c-u { width: 24px; } .c-comment { width: 100px; }
.sort { border: 5px solid transparent; border-bottom-color: #fff; border-top: 0; margin-left: 14px; vertical-align: 1px; }
.tree td { height: 20px; text-align: center; vertical-align: middle; }
.node { display: flex; align-items: center; height: 20px; white-space: nowrap; }
.node span { margin-left: 4px; }
.ex { width: 18px; height: 20px; }
.ni { width: 16px; height: 16px; }
.child { padding-left: 18px; }
.ok { width: 14px; height: 14px; display: block; margin: 0 auto; }
.splitter { height: 5px; background: #5b5b5b; margin-top: 3px; flex: none; }
.fold { display: flex; align-items: center; gap: 10px; height: 25px; flex: none; color: #51b3c0; padding: 5px 0 0 8px; font-size: 12px; }
.fold + .fold { height: 17px; border-top: 2px solid #222; padding-top: 0; }
.fold i, .sub i { border: 5px solid transparent; border-left: 5px solid #51b3c0; border-right: 0; }

/* document tabs */
.view { flex: 1; min-width: 0; display: flex; flex-direction: column; }
.tabs { display: flex; height: 26px; border-bottom: 3px solid #4d93a8; flex: none; }
.tabs a { display: flex; align-items: center; gap: 6px; padding: 0 14px; white-space: nowrap; }
.tabs .first { padding-left: 5px; }
.tabs svg { width: 16px; height: 16px; }
.tabs .doc { width: 12px; height: 14px; }
.tabs .on { background: #3097b8; padding: 0 8px; margin-left: 9px; }
.tabs .x { color: #7f9699; }

/* graphics window */
.canvas { position: relative; flex: 1; background: #000; min-height: 0; overflow: hidden; }
.floatbar { position: absolute; top: 5px; right: 225px; display: flex; align-items: center; height: 33px; padding: 0 5px 0 13px; background: #2f2f2f; gap: 3px; }
.floatbar .tri { margin-top: 14px; }
.dots { display: flex; gap: 4px; padding: 0 11px 0 10px; }
.dots i { width: 2px; height: 2px; background: #fff; }
.model { position: absolute; left: 814px; top: 305px; width: 340px; height: 500px; }
.triad { position: absolute; left: 50px; bottom: 8px; width: 136px; height: 130px; }

/* dialog */
.dialog { position: absolute; left: 154px; top: 137px; width: 297px; padding: 0 6px 10px; background: #313131; }
.dialog header { display: flex; align-items: center; gap: 2px; height: 24px; margin: 0 -6px 4px; padding: 0 7px; background: #3097b6; font-size: 13px; line-height: 18px; color: #e6f6fb; }
.dialog header h2 { flex: 1; margin-left: 4px; }
.dialog header button { width: 19px; height: 20px; display: grid; place-items: center; }
.dialog .help { font: bold 16px/18px "Noto Sans", sans-serif; }
.dialog section { background: #474747; border: 1px solid #1e1e1e; padding: 0 8px 7px; margin-bottom: 3px; }
.dialog h3 { display: flex; align-items: center; gap: 6px; height: 22px; color: #4fa3ae; margin-left: -2px; padding-bottom: 2px; }
.dialog h3::before { content: ""; border: 4px solid transparent; border-top: 5px solid #4fa3ae; border-bottom: 0; }
.gap { margin-top: 6px; }
.row { display: flex; align-items: center; justify-content: space-between; }
.drop-box.focus { width: 135px; }
.drop-box.focus select { height: 23px; background: linear-gradient(#064a6e, #064a6e) 2px 2px / 112px 17px no-repeat #474747; padding-left: 4px; }
.pick { display: flex; gap: 2px; height: 32px; }
.pick button { background: #ffae00; display: flex; align-items: center; color: #4a2a10; }
.sel { flex: 1; gap: 4px; }
.pick .face { width: 32px; justify-content: center; background: #f9a51c; }
.sub { display: flex; align-items: center; gap: 9px; width: 100%; height: 23px; margin: 4px 0 2px; padding-left: 9px; border: 1px solid #1e1e1e; color: #4fa3ae; }
.rev { width: 24px; height: 24px; border: 1px solid #ddd; display: grid; place-items: center; }
.info { margin-top: 5px; line-height: 21px; }
.checks { margin-top: 4px; }
.checks.loose { margin: 5px 0 1px; }
.checks.tight { margin-top: 1px; }
.checks label { display: flex; align-items: center; gap: 5px; height: 22px; }
.checks input { appearance: none; width: 12px; height: 12px; margin-left: 1px; border-radius: 2px; background: #f4f4f4; display: grid; place-items: center; }
.checks input:checked { background: #0a5cb0; }
.checks input:checked::before { content: ""; width: 6px; height: 3px; border: solid #fff; border-width: 0 0 1px 1px; transform: rotate(-45deg); margin-top: -2px; }
.off { color: #7f7f7f; }
.assist { width: 32px; height: 32px; border: 1px solid #7f7f7f; padding: 5px; background: #6b6b6b content-box; }
.dialog textarea { display: block; width: 265px; height: 68px; resize: none; background: #4a4a4a; border: 1px solid #1a1a1a; color: #7f7f7f; font: inherit; line-height: 15px; padding: 2px 1px; overflow: hidden; }
.collapse { height: 14px; display: flex; justify-content: center; align-items: center; border-bottom: 1px solid #111; }
.collapse i { border: 5px solid transparent; border-bottom-color: #fff; border-top: 0; }
.dialog footer { display: flex; justify-content: flex-end; gap: 5px; padding: 9px 10px 0; }
.dialog footer button { width: 66px; height: 23px; border: 1px solid #51a3ae; color: #5fb5c2; }
.dialog footer .primary { background: #42abc8; border-color: #42abc8; color: #e9f7fa; }
.cursor { position: absolute; left: 113px; top: 246px; width: 12px; height: 20px; }
```
